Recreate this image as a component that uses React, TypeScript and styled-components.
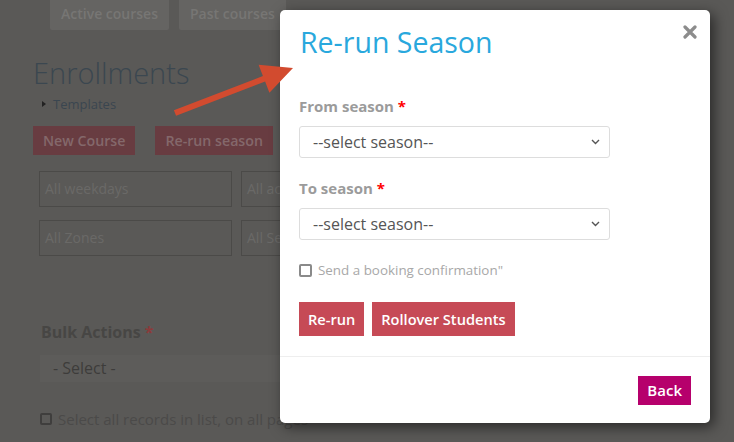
import { FC } from "react";
import styled, { createGlobalStyle } from "styled-components";

const GlobalStyle = createGlobalStyle`
  html, body {
    margin: 0;
    padding: 0;
    overflow: hidden;
  }
  body {
    font-family: "Open Sans", "Noto Sans", "Liberation Sans", sans-serif;
  }
  * {
    box-sizing: border-box;
  }
`;

const Chevron: FC = () => (
  <svg width="9" height="6" viewBox="0 0 9 6">
    <path d="M1 1l3.5 3.5L8 1" fill="none" stroke="#555" strokeWidth="1.4" />
  </svg>
);

const Arrow: FC = () => (
  <StyledArrow width="734" height="442" viewBox="0 0 734 442">
    <polygon
      points="173.9,110.2 262.9,76 258.6,64.8 293,68 269.4,92.8 265.1,81.6 176.1,115.8"
      fill="#d24b2f"
    />
  </StyledArrow>
);

const App: FC = () => {
  const filters = ["All weekdays", "All active", "All Zones", "All Seasons"];

  return (
    <>
      <GlobalStyle />
      <StyledStage>
        {/* page behind the backdrop, drawn in its dimmed colours */}
        <StyledPage>
          <StyledTabs>
            <StyledTab>Active courses</StyledTab>
            <StyledTab>Past courses</StyledTab>
          </StyledTabs>
          <StyledHeading>Enrollments</StyledHeading>
          <StyledTemplates>
            <StyledCaret />
            Templates
          </StyledTemplates>
          <StyledActions>
            <StyledDimButton>New Course</StyledDimButton>
            <StyledDimButton>Re-run season</StyledDimButton>
          </StyledActions>
          <StyledFilters>
            {filters.map((f) => (
              <StyledFilter key={f}>{f}</StyledFilter>
            ))}
          </StyledFilters>
          <StyledBulkLabel>
            Bulk Actions <StyledDimStar>*</StyledDimStar>
          </StyledBulkLabel>
          <StyledBulkSelect>- Select -</StyledBulkSelect>
          <StyledSelectAll>
            <StyledDimBox />
            Select all records in list, on all pages
          </StyledSelectAll>
        </StyledPage>

        <StyledModal>
          <StyledModalHeader>
            <StyledTitle>Re-run Season</StyledTitle>
            <StyledClose>
              <svg width="14" height="14" viewBox="0 0 14 14">
                <path
                  d="M2 2l10 10M12 2L2 12"
                  stroke="#8c8c8c"
                  strokeWidth="3.2"
                  strokeLinecap="round"
                />
              </svg>
            </StyledClose>
          </StyledModalHeader>
          <StyledModalBody>
            <StyledLabel>
              From season <StyledStar>*</StyledStar>
            </StyledLabel>
            <StyledSelect>
              --select season--
              <Chevron />
            </StyledSelect>
            <StyledLabel $gap={20}>
              To season <StyledStar>*</StyledStar>
            </StyledLabel>
            <StyledSelect>
              --select season--
              <Chevron />
            </StyledSelect>
            <StyledCheckRow>
              <StyledCheckBox />
              Send a booking confirmation"
            </StyledCheckRow>
            <StyledButtonRow>
              <StyledButton>Re-run</StyledButton>
              <StyledButton>Rollover Students</StyledButton>
            </StyledButtonRow>
          </StyledModalBody>
          <StyledModalFooter>
            <StyledBack>Back</StyledBack>
          </StyledModalFooter>
        </StyledModal>

        <Arrow />
      </StyledStage>
    </>
  );
};

export default App;

const StyledStage = styled.div`
  position: relative;
  width: 734px;
  height: 442px;
  overflow: hidden;
  background: #5a5957;
`;

const StyledPage = styled.div`
  padding-left: 33px;
  display: flex;
  flex-direction: column;
  align-items: flex-start;
`;

const StyledTabs = styled.div`
  display: flex;
  gap: 10px;
  margin-top: -5px;
  margin-left: 17px;
`;

const StyledTab = styled.div`
  height: 35px;
  line-height: 38px;
  padding: 0 11px;
  border-radius: 2px;
  background: #656462;
  color: #777674;
  font-size: 14px;
  font-weight: 600;
`;

const StyledHeading = styled.div`
  margin-top: 26px;
  font-size: 29px;
  font-weight: 300;
  line-height: 34px;
  color: #3b4750;
`;

const StyledTemplates = styled.div`
  margin-top: 6px;
  padding-left: 9px;
  display: flex;
  align-items: center;
  gap: 7px;
  font-size: 13px;
  line-height: 16px;
  color: #3a4650;
`;

const StyledCaret = styled.span`
  width: 0;
  height: 0;
  border-top: 3px solid transparent;
  border-bottom: 3px solid transparent;
  border-left: 4px solid #222;
`;

const StyledActions = styled.div`
  margin-top: 14px;
  display: flex;
  gap: 20px;
`;

const StyledDimButton = styled.div`
  height: 29px;
  line-height: 29px;
  padding: 0 10px;
  background: #683c41;
  color: #84686b;
  font-size: 14.2px;
  font-weight: 600;
`;

const StyledFilters = styled.div`
  margin-top: 16px;
  margin-left: 6px;
  display: grid;
  grid-template-columns: 193px 193px;
  column-gap: 9px;
  row-gap: 13px;
`;

const StyledFilter = styled.div`
  height: 36px;
  line-height: 34px;
  padding-left: 5px;
  border: 1px solid #4b4a48;
  color: #6a6967;
  font-size: 14px;
`;

const StyledBulkLabel = styled.div`
  margin-top: 66px;
  margin-left: 8px;
  font-size: 16px;
  font-weight: 700;
  line-height: 20px;
  color: #474644;
`;

const StyledDimStar = styled.span`
  color: #8a3b3b;
`;

const StyledBulkSelect = styled.div`
  margin-top: 13px;
  margin-left: 7px;
  width: 300px;
  height: 27px;
  line-height: 27px;
  padding-left: 13px;
  background: #5d5c5a;
  color: #3d3c3b;
  font-size: 16px;
`;

const StyledSelectAll = styled.div`
  margin-top: 27px;
  margin-left: 7px;
  display: flex;
  align-items: center;
  gap: 6px;
  font-size: 15px;
  color: #4b4a49;
  white-space: nowrap;
`;

const StyledDimBox = styled.span`
  width: 12px;
  height: 12px;
  border: 2px solid #3f3e3d;
  border-radius: 2px;
`;

const StyledModal = styled.div`
  position: absolute;
  left: 280px;
  top: 10px;
  width: 430px;
  height: 413px;
  display: flex;
  flex-direction: column;
  background: #fff;
  border-radius: 5px;
  box-shadow: 4px 4px 14px rgba(0, 0, 0, 0.55);
`;

const StyledModalHeader = styled.div`
  position: relative;
  padding: 15px 20px 0;
`;

const StyledTitle = styled.div`
  font-size: 28.5px;
  line-height: 34px;
  color: #29a8dd;
`;

const StyledClose = styled.div`
  position: absolute;
  right: 13px;
  top: 12px;
`;

const StyledModalBody = styled.div`
  padding: 0 19px 20px;
  display: flex;
  flex-direction: column;
  align-items: flex-start;
`;

const StyledLabel = styled.div<{ $gap?: number }>`
  margin-top: ${(p) => p.$gap ?? 37}px;
  font-size: 15px;
  font-weight: 700;
  line-height: 21px;
  color: #9b9b9b;
`;

const StyledStar = styled.span`
  color: #f00;
`;

const StyledSelect = styled.div`
  margin-top: 9px;
  width: 311px;
  height: 32px;
  padding: 0 9px 0 13px;
  display: flex;
  align-items: center;
  justify-content: space-between;
  border: 1px solid #ddd;
  border-radius: 3px;
  color: #555;
  font-size: 16px;
`;

const StyledCheckRow = styled.div`
  margin-top: 22px;
  height: 16px;
  display: flex;
  align-items: center;
  gap: 6px;
  font-size: 13.4px;
  color: #a8a8a8;
`;

const StyledCheckBox = styled.span`
  width: 13px;
  height: 13px;
  border: 2px solid #8a8a8a;
  border-radius: 2px;
`;

const StyledButtonRow = styled.div`
  margin-top: 24px;
  display: flex;
  gap: 8px;
`;

const StyledButton = styled.div`
  height: 34px;
  line-height: 34px;
  padding: 0 9px;
  background: #c64a56;
  color: #fff;
  font-size: 14.6px;
  font-weight: 600;
`;

const StyledModalFooter = styled.div`
  border-top: 1px solid #eee;
  padding: 19px 19px;
  display: flex;
  justify-content: flex-end;
`;

const StyledBack = styled.div`
  height: 29px;
  line-height: 29px;
  padding: 0 9px;
  background: #b6006c;
  color: #fff;
  font-size: 15px;
  font-weight: 600;
`;

const StyledArrow = styled.svg`
  position: absolute;
  left: 0;
  top: 0;
  pointer-events: none;
`;
